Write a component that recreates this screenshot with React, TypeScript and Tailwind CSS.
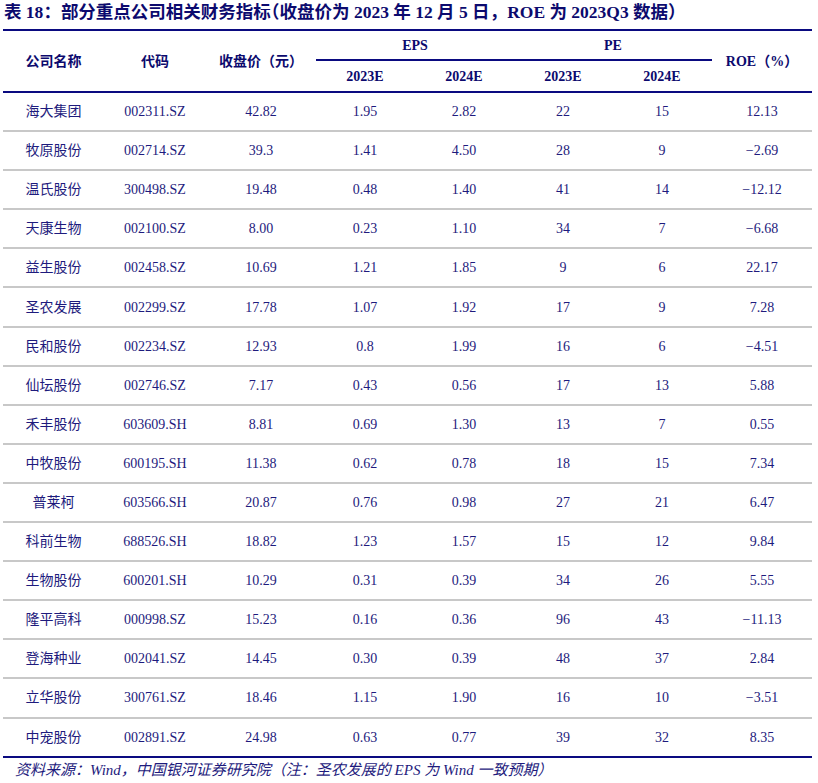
import React from "react";

const rows: string[][] = [
  ["海大集团", "002311.SZ", "42.82", "1.95", "2.82", "22", "15", "12.13"],
  ["牧原股份", "002714.SZ", "39.3", "1.41", "4.50", "28", "9", "−2.69"],
  ["温氏股份", "300498.SZ", "19.48", "0.48", "1.40", "41", "14", "−12.12"],
  ["天康生物", "002100.SZ", "8.00", "0.23", "1.10", "34", "7", "−6.68"],
  ["益生股份", "002458.SZ", "10.69", "1.21", "1.85", "9", "6", "22.17"],
  ["圣农发展", "002299.SZ", "17.78", "1.07", "1.92", "17", "9", "7.28"],
  ["民和股份", "002234.SZ", "12.93", "0.8", "1.99", "16", "6", "−4.51"],
  ["仙坛股份", "002746.SZ", "7.17", "0.43", "0.56", "17", "13", "5.88"],
  ["禾丰股份", "603609.SH", "8.81", "0.69", "1.30", "13", "7", "0.55"],
  ["中牧股份", "600195.SH", "11.38", "0.62", "0.78", "18", "15", "7.34"],
  ["普莱柯", "603566.SH", "20.87", "0.76", "0.98", "27", "21", "6.47"],
  ["科前生物", "688526.SH", "18.82", "1.23", "1.57", "15", "12", "9.84"],
  ["生物股份", "600201.SH", "10.29", "0.31", "0.39", "34", "26", "5.55"],
  ["隆平高科", "000998.SZ", "15.23", "0.16", "0.36", "96", "43", "−11.13"],
  ["登海种业", "002041.SZ", "14.45", "0.30", "0.39", "48", "37", "2.84"],
  ["立华股份", "300761.SZ", "18.46", "1.15", "1.90", "16", "10", "−3.51"],
  ["中宠股份", "002891.SZ", "24.98", "0.63", "0.77", "39", "32", "8.35"],
];

const cols = "grid grid-cols-[101px_102px_110px_98px_100px_98px_100px_100px]";

export default function App() {
  return (
    <div
      className="w-[818px] h-[783px] bg-white text-[#1e1b7d] overflow-hidden"
      style={{ fontFamily: '"Liberation Serif", "Noto Sans CJK SC", serif' }}
    >
      <div className="h-[29px] pl-[4px] pt-[1px] text-[17.5px] leading-[22px] font-bold text-[#0c0a6e] whitespace-nowrap [font-feature-settings:'halt']">
        表 18<span className="[font-feature-settings:normal]">：</span>部分重点公司相关财务指标（收盘价为 2023 年 12 月 5 日
        <span className="[font-feature-settings:normal]">，</span>ROE 为 2023Q3 数据）
      </div>
      <div className="ml-[3px] w-[809px]">
        <div
          className={`${cols} grid-rows-[30px_30px] h-[64px] border-y-2 border-[#0a0a80] font-bold text-[14px] text-[#0c0a6e]`}
        >
          <div className="row-span-2 flex items-center justify-center">公司名称</div>
          <div className="row-span-2 flex items-center justify-center">代码</div>
          <div className="row-span-2 flex items-center justify-center">收盘价（元）</div>
          <div className="col-span-2 flex items-center justify-center border-b-2 border-[#0a0a80]">EPS</div>
          <div className="col-span-2 flex items-center justify-center border-b-2 border-[#0a0a80]">PE</div>
          <div className="row-span-2 flex items-center justify-center">ROE（%）</div>
          <div className="flex items-center justify-center">2023E</div>
          <div className="flex items-center justify-center">2024E</div>
          <div className="flex items-center justify-center">2023E</div>
          <div className="flex items-center justify-center">2024E</div>
        </div>
        {rows.map((r, i) => (
          <div
            key={i}
            className={`${cols} h-[39.1px] border-b-2 text-[14px] ${
              i === rows.length - 1 ? "border-[#0a0a80]" : "border-[#c8c8c8]"
            }`}
          >
            {r.map((c, j) => (
              <div key={j} className="flex items-center justify-center whitespace-nowrap">
                {c}
              </div>
            ))}
          </div>
        ))}
      </div>
      <div className="pl-[15px] pt-[2px] text-[15px] leading-[21px] italic whitespace-nowrap">
        资料来源：Wind，中国银河证券研究院（注：圣农发展的 EPS 为 Wind 一致预期）
      </div>
    </div>
  );
}
